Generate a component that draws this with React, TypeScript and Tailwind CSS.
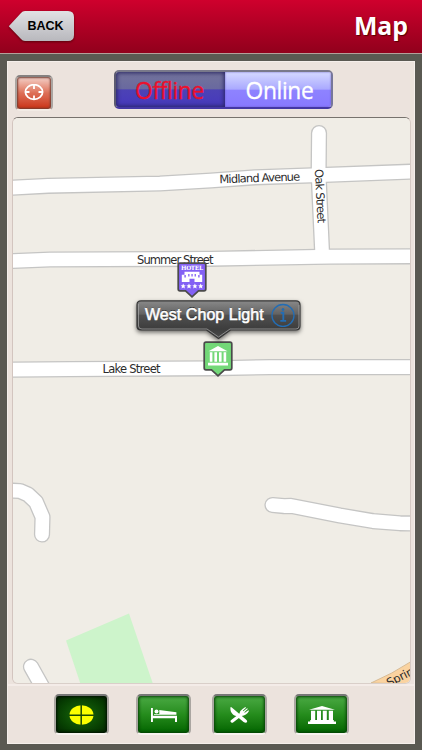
import React from "react";

const sans = "font-['Open_Sans','Noto_Sans',sans-serif]";

const roads = [
  "M8 187.9 L48 185.8 L160 183.5 L211 180.5 L255 177.3 L319 175.1 L415 171.5",
  "M319 133 L318.6 175 L322.3 256",
  "M8 261.2 L50 259.5 L211 258.8 L330 256.6 L415 256.3",
  "M8 369.7 L70 369.1 L211 368.3 L270 367.1 L415 367.1",
  "M8 490.5 L20 491 L28 494.5 L36 502 L42.5 517 L42 534.5",
  "M272.5 505 L284 506.1 L291 505.9 L340 515.5 L373 521.1 L400 523.3 L415 523.5",
  "M31 666.7 L48 697",
];

function Temple({ className }: { className: string }) {
  return (
    <svg className={className} viewBox="0 0 28 18" fill="white" preserveAspectRatio="none">
      <path d="M14 0 L27 3.7 H1Z M3 4.7h4.2v9.3H3z M9 4.7h4v9.3H9z M14.8 4.7h4v9.3h-4z M20.8 4.7H25v9.3h-4.2z M2.2 14h23.6v1.4H28V18H0v-2.6h2.2z" />
    </svg>
  );
}

function Bed() {
  return (
    <svg className="h-[14px] w-[26px]" viewBox="0 0 26 14" fill="white">
      <path d="M0 0h1.9v7.7H26V14h-2v-3.8H1.9V14H0z" />
      <circle cx="5.5" cy="3.6" r="2" />
      <path d="M8.3 2 L25.4 4.3 V6.7 H3 V6 H8.3z" />
    </svg>
  );
}

function Cutlery() {
  return (
    <svg className="h-4 w-[19px]" viewBox="0 0 19 16" fill="white">
      <path d="M.6 0 C-.4 4.5 2.6 8.4 6.4 9 L13.6 15 Q16.5 16.6 17.2 14.4 Q17.2 13.4 16 12.4 L1.5.2z" />
      <path d="M1.2 13 L9.3 6.8 Q9.8 3.5 12.5 2 L15.4 0 16 .7 12.8 3.8 13.3 4.3 17.2 1.2 17.8 1.9 14.3 5.3 14.8 5.8 18.4 3.2 19 4 Q16.5 8.7 11.5 9 L3.4 15.2 Q1.6 16.4 .6 14.8 Q.2 13.8 1.2 13z" />
    </svg>
  );
}

function Globe() {
  return (
    <svg className="h-5 w-[25px]" viewBox="0 0 25 20">
      <ellipse cx="12.5" cy="10" rx="12" ry="9.8" fill="#fbff00" />
      <path d="M12.2 0v20M0 10.2h25" stroke="#194b04" strokeWidth="1.5" />
    </svg>
  );
}

function ToolButton({ active = false, children }: { active?: boolean; children: React.ReactNode }) {
  return (
    <button
      className={
        "flex h-[41px] w-[55px] items-center justify-center rounded-[5px] border-2 border-t-[#777] border-x-[#aaa6a1] border-b-[#f7f3ef] " +
        (active
          ? "bg-[radial-gradient(ellipse_at_center,#196b0c_0%,#073f02_65%,#022400_100%)] shadow-[inset_0_0_3px_1px_#001000]"
          : "bg-linear-to-b from-[#4aaa43] via-[#258c1c] to-[#006400] shadow-[inset_0_0_3px_1px_#063e05]")
      }
    >
      {children}
    </button>
  );
}

function MapCanvas() {
  return (
    <svg className="block h-full w-full" viewBox="13 118 397 565" preserveAspectRatio="none">
      <rect x="12" y="117" width="399" height="566" fill="#f0ede6" />
      <path d="M66 640.5 L129 613.5 L153 684 H80.5z" fill="#cdf4cb" />
      <g fill="none" stroke="#c5c5c4" strokeWidth="16.2" strokeLinecap="round" strokeLinejoin="round">
        {roads.map((d) => <path key={d} d={d} />)}
      </g>
      <g fill="none" stroke="#fff" strokeWidth="13.6" strokeLinecap="round" strokeLinejoin="round">
        {roads.map((d) => <path key={d} d={d} />)}
      </g>
      <path d="M371 683 Q392 674 412 661 V684z" fill="#fad3a0" stroke="#d6bb95" strokeWidth="1" />
      <g fill="#2c2c2c" fontSize="11.5" fontFamily="'DejaVu Sans', sans-serif">
        <text x="219.5" y="183.3" textLength="81" transform="rotate(-2 219 184)">Midland Avenue</text>
        <text x="137" y="263.5" textLength="76.5">Summer Street</text>
        <text x="102.5" y="373.3" textLength="58">Lake Street</text>
        <text x="0" y="0" textLength="54" transform="translate(314.8 169.3) rotate(87)">Oak Street</text>
        <text x="0" y="0" textLength="36" transform="translate(389 687) rotate(-27)">Spring</text>
      </g>
    </svg>
  );
}

function Pin({ kind }: { kind: "hotel" | "museum" }) {
  const hotel = kind === "hotel";
  return (
    <svg className="block h-[36px] w-[30px]" viewBox="0 0 30 36">
      <path
        d="M3 1.2h24q1.8 0 1.8 1.8v24q0 1.8-1.8 1.8h-5.5L15 34.8 8.5 28.8H3Q1.2 28.8 1.2 27V3Q1.2 1.2 3 1.2z"
        fill={hotel ? "#8361f4" : "#73d878"}
        stroke="#4b4b4b"
        strokeWidth="1.7"
      />
      {hotel ? (
        <g fill="white">
          <text x="15" y="8.2" textAnchor="middle" textLength="22" fontSize="5.8" fontWeight="bold" fontFamily="'DejaVu Serif', serif">HOTEL</text>
          <path fillRule="evenodd" d="M7.5 9.8h15v3h2.7V20H17.5v-3.2h-5V20H4.8v-7.2h2.7z M7.4 13h1.4v2.6H7.4z M11.2 12h1.3v2.6h-1.3z M14.4 12h1.3v2.6h-1.3z M17.6 12h1.3v2.6h-1.3z M21.2 13h1.4v2.6h-1.4z" />
          {[6.2, 12, 17.9, 23.7].map((x) => (
            <path
              key={x}
              transform={`translate(${x} 24.2)`}
              d="M0-2.6 L.8-.9 2.6-.8 1.2.4 1.7 2.2 0 1.2-1.7 2.2-1.2.4-2.6-.8-.8-.9z"
            />
          ))}
        </g>
      ) : (
        <path fill="white" d="M15 5 L24.5 10.3 H5.5z M6.8 11.2h2.6v9.5H6.8z M11.4 11.2H14v9.5h-2.6z M16 11.2h2.6v9.5H16z M20.6 11.2h2.6v9.5h-2.6z M5 21.8h20v2.6H5z" />
      )}
    </svg>
  );
}

function Callout() {
  return (
    <div className="relative h-[42px] w-[166px]">
      <svg className="absolute inset-0 overflow-visible drop-shadow-[0_2px_2px_rgba(0,0,0,0.55)]" width="166" height="42" viewBox="0 0 166 42">
        <defs>
          <linearGradient id="glass" x1="0" y1="0" x2="0" y2="1">
            <stop offset="0" stopColor="#898989" />
            <stop offset=".36" stopColor="#626262" />
            <stop offset=".37" stopColor="#505050" />
            <stop offset=".75" stopColor="#3d3d3d" />
            <stop offset="1" stopColor="#4b4b4b" />
          </linearGradient>
        </defs>
        <path
          d="M5 .8H160Q164 .8 164 4.8V26Q164 30 160 30H94.5L82.5 38.5 70.5 30H5Q1 30 1 26V4.8Q1 .8 5 .8z"
          fill="url(#glass)"
          stroke="#383838"
          strokeWidth="1.2"
        />
        <path d="M2.5 4V26Q2.5 29 6 29H71L82.5 37 94 29H160Q163 29 163 26V5" fill="none" stroke="#aaa" strokeWidth=".7" />
      </svg>
      <div className="relative flex h-[30px] items-center pr-[7px] pl-[9px]">
        <span className="flex-1 font-['Liberation_Sans',Arial,sans-serif] text-[16px] tracking-[0.05px] whitespace-nowrap text-white [-webkit-text-stroke:0.55px_white] [text-shadow:0_-1px_0_#222]">
          West Chop Light
        </span>
        <svg className="size-6 shrink-0" viewBox="0 0 24 24" fill="none" stroke="#226db5">
          <circle cx="12" cy="12.5" r="11" strokeWidth="1.3" />
          <path d="M9.7 9.8h2.6v8M9.3 17.9h5.8" strokeWidth="1.9" />
          <circle cx="12" cy="6.5" r="1" fill="#226db5" />
        </svg>
      </div>
    </div>
  );
}

export default function App() {
  return (
    <div className={`flex h-[750px] w-[422px] flex-col overflow-hidden bg-[#5a5952] ${sans}`}>
      <header className="flex h-[54px] shrink-0 justify-between border-b border-[#b49f9a] bg-linear-to-b from-[#cf002d] to-[#91001c] pr-[14px] pl-2">
        <button className="relative mt-[10px] h-[32px] w-[67px]">
          <svg className="absolute inset-0 drop-shadow-[0_1px_1px_rgba(60,0,0,.7)]" width="67" height="32" viewBox="0 0 67 32">
            <defs>
              <linearGradient id="silver" x1="0" y1="0" x2="0" y2="1">
                <stop stopColor="#e1e1e4" />
                <stop offset="1" stopColor="#b8b8bd" />
              </linearGradient>
            </defs>
            <path d="M17 1H60Q66 1 66 7V25Q66 31 60 31H17Q14.5 31 13 29L.8 16.2 13 3Q14.5 1 17 1z" fill="url(#silver)" />
          </svg>
          <span className="relative block pl-[8px] text-center font-['Liberation_Sans',Arial,sans-serif] text-[12.5px] leading-[32px] font-bold text-black">BACK</span>
        </button>
        <h1 className="pt-[7px] text-[24.8px] leading-[36px] font-bold text-white [text-shadow:1px_1px_1px_#500]">Map</h1>
      </header>

      <main className="mx-[7px] mt-[7px] flex h-[683px] flex-col border border-[#f5efeb] bg-[#ece3dd]">
        <div className="flex h-[55px] shrink-0 pt-[8px] pl-[7px]">
          <button className="mt-[5px] flex h-[36px] w-[38px] items-center justify-center rounded-[5px] border-2 border-t-[#858180] border-x-[#aaa5a1] border-b-[#f2ebe5] bg-linear-to-b from-[#f2d2cb] via-[#dd6f57] to-[#c92d0d] shadow-[inset_0_0_2px_1px_#743e32]">
            <svg className="h-[18px] w-5" viewBox="0 0 20 18" fill="none" stroke="white" strokeWidth="1.8">
              <ellipse cx="10" cy="8" rx="8.6" ry="7.3" />
              <path d="M10 1v4M10 11.5v4M1 8h4.5M14.5 8H19" />
            </svg>
          </button>
          <div className="ml-[61px] flex h-[39px] w-[219px] overflow-hidden rounded-[5px] border-2 border-t-[#79798a] border-r-[#77769a] border-b-[#4437a4] border-l-[#5c5b70] text-[22.8px] leading-[37px] tracking-[-0.35px] [-webkit-text-stroke-width:0.3px]">
            <div className="w-[109px] bg-[linear-gradient(#74749b_0%,#69699f_48%,#4c42b5_51%,#4638bd_100%)] pr-[2px] text-center text-[#eb102d] shadow-[inset_0_0_4px_1px_#292563]">
              Offline
            </div>
            <div className="flex-1 bg-[linear-gradient(#d5d9ff_0%,#aaa9ff_49%,#8e83ff_52%,#8879ff_100%)] pl-[3px] text-center text-white shadow-[inset_0_0_2px_#6258c2]">
              Online
            </div>
          </div>
        </div>

        <section className="relative ml-1 h-[567px] w-[399px] shrink-0 overflow-hidden rounded-md border border-t-[#77726d] border-r-[#d6cac4] border-b-[#d9cfc9] border-l-[#d3c5bf]">
          <MapCanvas />
          <div className="absolute top-[144px] left-[164px]"><Pin kind="hotel" /></div>
          <div className="absolute top-[223px] left-[190px]"><Pin kind="museum" /></div>
          <div className="absolute top-[182px] left-[123px]"><Callout /></div>
        </section>

        <nav className="flex h-[60px] items-start border-t-2 border-[#f4ece8] pt-[8px] pl-[46px]">
          <div><ToolButton active><Globe /></ToolButton></div>
          <div className="ml-[27px]"><ToolButton><Bed /></ToolButton></div>
          <div className="ml-[21px]"><ToolButton><Cutlery /></ToolButton></div>
          <div className="ml-[27px]"><ToolButton><Temple className="h-[18px] w-7" /></ToolButton></div>
        </nav>
      </main>
    </div>
  );
}
